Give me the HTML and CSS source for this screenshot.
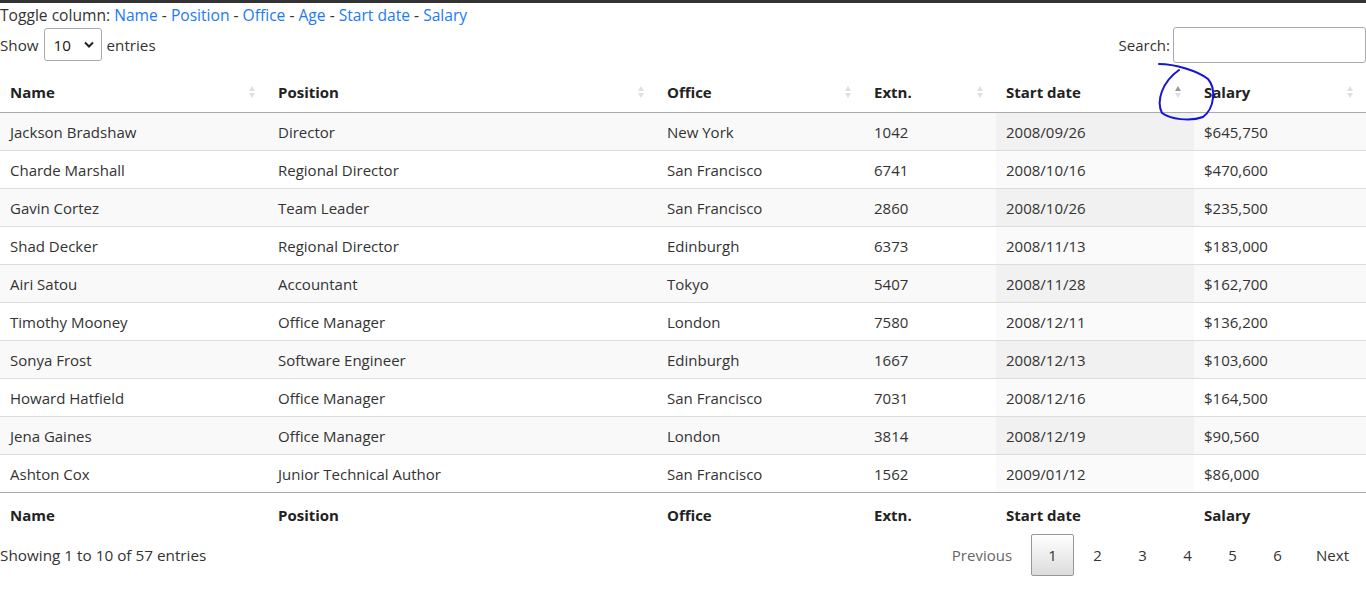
FILE: index.html
```html
<!DOCTYPE html>
<html>
<head>
<meta charset="utf-8">
<link rel="stylesheet" href="styles.css">
</head>
<body>
<div class="page">
  <div class="toggle">Toggle column: <a>Name</a> - <a>Position</a> - <a>Office</a> - <a>Age</a> - <a>Start date</a> - <a>Salary</a></div>
  <div class="controls">
    <label class="length">Show <span class="select">10<svg width="10" height="7" viewBox="0 0 10 7"><path d="M1 1.5 L5 5.5 L9 1.5" fill="none" stroke="#222" stroke-width="2"/></svg></span> entries</label>
    <label class="search">Search:<span class="input"></span></label>
  </div>
  <table class="data">
    <colgroup>
      <col class="c1"><col class="c2"><col class="c3"><col class="c4"><col class="c5"><col class="c6">
    </colgroup>
    <thead>
      <tr>
        <th><span>Name</span><i class="sort"></i></th>
        <th><span>Position</span><i class="sort"></i></th>
        <th><span>Office</span><i class="sort"></i></th>
        <th><span>Extn.</span><i class="sort"></i></th>
        <th><span>Start date</span><i class="sort asc"></i></th>
        <th><span>Salary</span><i class="sort"></i></th>
      </tr>
    </thead>
    <tbody>
      <tr><td>Jackson Bradshaw</td><td>Director</td><td>New York</td><td>1042</td><td class="sorted">2008/09/26</td><td>$645,750</td></tr>
      <tr><td>Charde Marshall</td><td>Regional Director</td><td>San Francisco</td><td>6741</td><td class="sorted">2008/10/16</td><td>$470,600</td></tr>
      <tr><td>Gavin Cortez</td><td>Team Leader</td><td>San Francisco</td><td>2860</td><td class="sorted">2008/10/26</td><td>$235,500</td></tr>
      <tr><td>Shad Decker</td><td>Regional Director</td><td>Edinburgh</td><td>6373</td><td class="sorted">2008/11/13</td><td>$183,000</td></tr>
      <tr><td>Airi Satou</td><td>Accountant</td><td>Tokyo</td><td>5407</td><td class="sorted">2008/11/28</td><td>$162,700</td></tr>
      <tr><td>Timothy Mooney</td><td>Office Manager</td><td>London</td><td>7580</td><td class="sorted">2008/12/11</td><td>$136,200</td></tr>
      <tr><td>Sonya Frost</td><td>Software Engineer</td><td>Edinburgh</td><td>1667</td><td class="sorted">2008/12/13</td><td>$103,600</td></tr>
      <tr><td>Howard Hatfield</td><td>Office Manager</td><td>San Francisco</td><td>7031</td><td class="sorted">2008/12/16</td><td>$164,500</td></tr>
      <tr><td>Jena Gaines</td><td>Office Manager</td><td>London</td><td>3814</td><td class="sorted">2008/12/19</td><td>$90,560</td></tr>
      <tr><td>Ashton Cox</td><td>Junior Technical Author</td><td>San Francisco</td><td>1562</td><td class="sorted">2009/01/12</td><td>$86,000</td></tr>
    </tbody>
    <tfoot>
      <tr><th>Name</th><th>Position</th><th>Office</th><th>Extn.</th><th>Start date</th><th>Salary</th></tr>
    </tfoot>
  </table>
  <div class="bottom">
    <div class="info">Showing 1 to 10 of 57 entries</div>
    <div class="paging">
      <span class="pbtn disabled">Previous</span>
      <span class="pbtn current">1</span>
      <span class="pbtn">2</span>
      <span class="pbtn">3</span>
      <span class="pbtn">4</span>
      <span class="pbtn">5</span>
      <span class="pbtn">6</span>
      <span class="pbtn">Next</span>
    </div>
  </div>
  <svg class="scribble" width="80" height="70" viewBox="1150 58 80 70"><path d="M1159,64 C1175,64 1198,71 1208,79 C1216,88 1215,108 1203,117 C1190,122 1170,119 1162,113 C1156,101 1162,82 1179,70" fill="none" stroke="#1414d8" stroke-width="2" stroke-linecap="round"/></svg>
</div>
</body>
</html>
```

FILE: styles.css
```css
html, body {
  margin: 0;
  padding: 0;
  background: #fff;
}
body {
  border-top: 3px solid #333;
  font-family: "Open Sans", "Noto Sans", sans-serif;
  font-size: 15px;
  color: #333;
}
.page {
  position: relative;
}
.toggle {
  height: 26px;
  line-height: 25px;
  font-size: 15.6px;
}
.toggle a {
  color: #1a7af8;
}
.controls {
  display: flex;
  justify-content: space-between;
  align-items: flex-end;
  height: 41px;
}
.length {
  display: flex;
  align-items: center;
  gap: 5px;
  align-self: flex-start;
  margin-top: -1px;
  font-size: 15.2px;
}
.select {
  display: inline-flex;
  align-items: center;
  justify-content: space-between;
  box-sizing: border-box;
  width: 58px;
  height: 33px;
  padding: 0 7px 0 9px;
  margin-left: 0;
  border: 1px solid #aaa;
  border-radius: 3px;
  color: #111;
}
.search {
  display: flex;
  align-items: center;
  gap: 3px;
  margin-bottom: 7px;
}
.input {
  display: block;
  box-sizing: border-box;
  width: 193px;
  height: 36px;
  border: 1px solid #aaa;
  border-radius: 3px;
}
.data {
  width: 100%;
  border-collapse: separate;
  border-spacing: 0;
  table-layout: fixed;
}
.c1 { width: 268px; }
.c2 { width: 389px; }
.c3 { width: 207px; }
.c4 { width: 132px; }
.c5 { width: 198px; }
.c6 { width: 172px; }
.data th {
  text-align: left;
  font-weight: 700;
  color: #222;
}
.data thead th {
  position: relative;
  height: 43px;
  box-sizing: border-box;
  padding: 1px 18px 0 10px;
  border-bottom: 1px solid #aaa;
}
.sort {
  position: absolute;
  right: 12px;
  top: 15px;
  width: 8px;
  height: 14px;
}
.sort::before, .sort::after {
  content: "";
  position: absolute;
  left: 1px;
  border-left: 3px solid transparent;
  border-right: 3px solid transparent;
}
.sort::before {
  top: 1px;
  border-bottom: 5px solid #e0e0e0;
}
.sort::after {
  top: 8px;
  border-top: 5px solid #e0e0e0;
}
.sort.asc::before {
  border-bottom-color: #999;
}
.data td {
  height: 38px;
  box-sizing: border-box;
  padding: 0 10px;
  border-top: 1px solid #ddd;
  white-space: nowrap;
}
.data tbody tr:first-child td {
  border-top: none;
  height: 37px;
}
.data tbody tr:nth-child(odd) td {
  background: #f9f9f9;
}
.data tbody tr:nth-child(odd) td.sorted {
  background: #f1f1f1;
}
.data tbody tr:nth-child(even) td.sorted {
  background: #fafafa;
}
.data tfoot th {
  height: 43px;
  box-sizing: border-box;
  padding: 1px 10px 0 10px;
  border-top: 1px solid #aaa;
}
.bottom {
  display: flex;
  justify-content: space-between;
  align-items: center;
  height: 42px;
  margin-top: -1px;
}
.info {
  font-size: 15.3px;
}
.paging {
  display: flex;
  align-items: center;
  margin-right: 2px;
}
.pbtn {
  display: inline-flex;
  align-items: center;
  justify-content: center;
  box-sizing: border-box;
  height: 42px;
  min-width: 43px;
  padding: 0 14px;
  margin-left: 2px;
  border: 1px solid transparent;
  border-radius: 2px;
  color: #333;
}
.pbtn.disabled {
  color: #666;
  margin-right: 2px;
}
.pbtn.current {
  border-color: #979797;
  background: linear-gradient(to bottom, #fff 0%, #dcdcdc 100%);
}
.scribble {
  position: absolute;
  left: 1150px;
  top: 55px;
  pointer-events: none;
}
```
